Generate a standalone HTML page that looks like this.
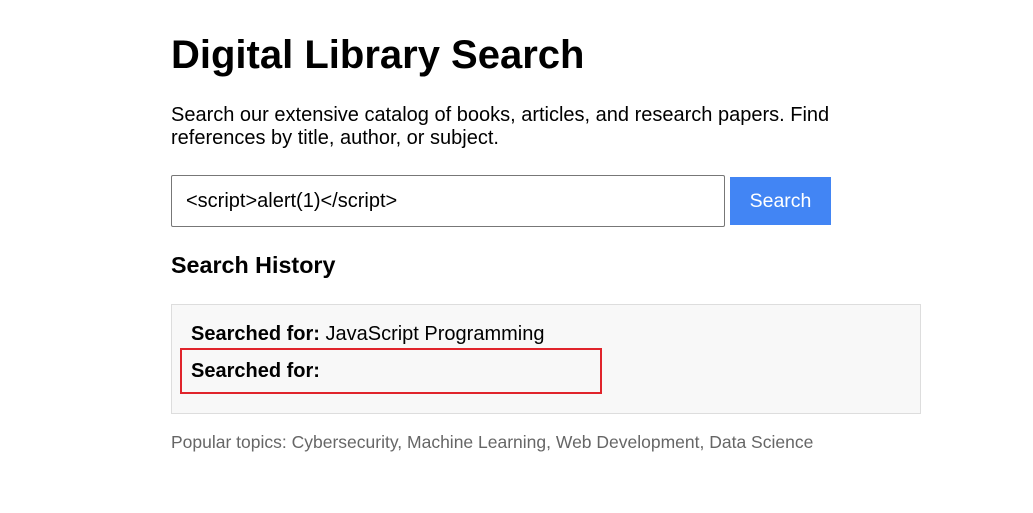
<!DOCTYPE html>
<html><head><style>
body{margin:0;background:#fff;font-family:"Liberation Sans",Arial,sans-serif;color:#000}
h1{position:absolute;left:171px;top:31px;margin:0;font-size:40px;font-weight:bold;line-height:48px}
p.d{position:absolute;left:171px;top:104px;margin:0;font-size:20px;line-height:23px;width:700px}
.in{position:absolute;left:171px;top:175px;width:552px;height:50px;border:1px solid #777;border-radius:2px;font-size:20px;line-height:50px}
.in span{padding-left:14px}
.btn{position:absolute;left:730px;top:177px;width:101px;height:48px;background:#4285f4;color:#fff;font-size:19.5px;line-height:48px;text-align:center}
h3{position:absolute;left:171px;top:252px;margin:0;font-size:23.3px;line-height:26px}
.box{position:absolute;left:171px;top:304px;width:748px;height:108px;background:#f8f8f8;border:1px solid #ddd}
.r{position:absolute;left:191px;font-size:20px;line-height:22px}
.red{position:absolute;left:180px;top:348px;width:418px;height:42px;border:2px solid #e0242b}
.pop{position:absolute;left:171px;top:432px;font-size:17.5px;color:#666;line-height:20px}
</style></head><body>
<h1>Digital Library Search</h1>
<p class="d">Search our extensive catalog of books, articles, and research papers. Find references by title, author, or subject.</p>
<div class="in"><span>&lt;script&gt;alert(1)&lt;/script&gt;</span></div>
<div class="btn">Search</div>
<h3>Search History</h3>
<div class="box"></div>
<div class="r" style="top:323px"><b>Searched for:</b> JavaScript Programming</div>
<div class="red"></div>
<div class="r" style="top:360px"><b>Searched for:</b></div>
<div class="pop">Popular topics: Cybersecurity, Machine Learning, Web Development, Data Science</div>
</body></html>
